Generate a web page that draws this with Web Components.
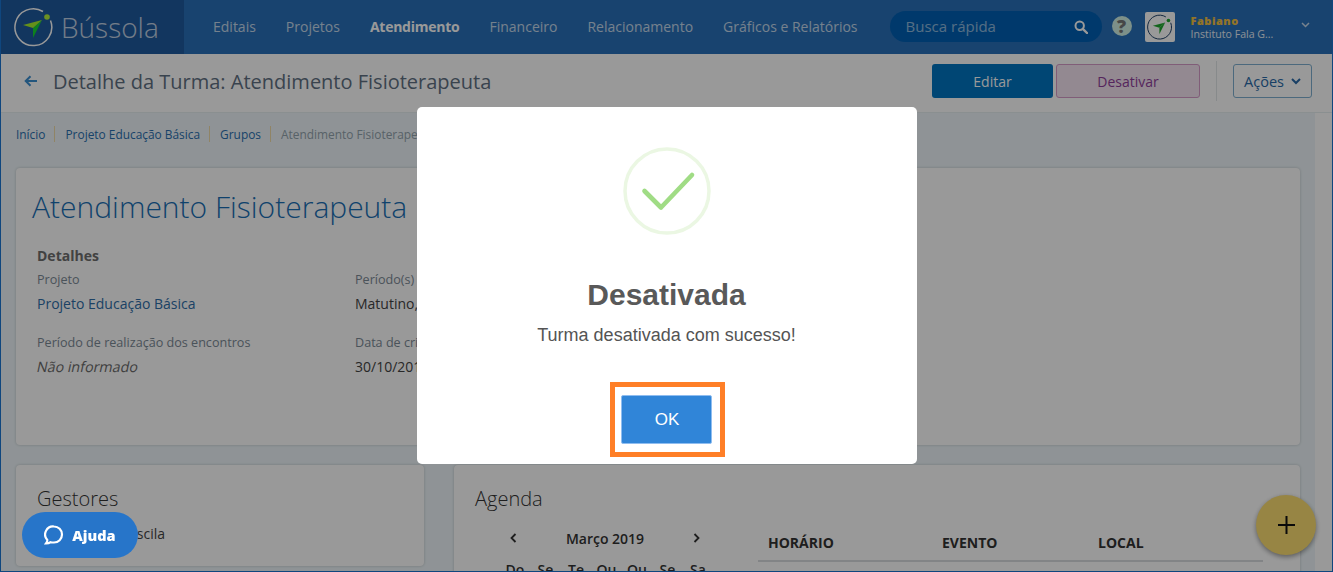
<!DOCTYPE html>
<html lang="pt-BR">
<head>
<meta charset="utf-8">
<title>Detalhe da Turma</title>
<style>
html, body { margin: 0; height: 100%; overflow: hidden; }
body { font-family: "Open Sans", sans-serif; background: #fff; }
</style>
</head>
<body>

<template id="bussola-mark">
  <style>
    :host { display: block; line-height: 0; }
  </style>
  <svg viewBox="0 0 40 40" width="100%" height="100%">
    <path d="M29 4.5A18.4 18.4 0 1 0 36.5 13.5" fill="none" stroke="var(--ring, #fff)" stroke-width="1.5"/>
    <circle cx="33" cy="10" r="2.8" fill="var(--dot, #b5f03a)"/>
    <path d="M28 13 19 31 19 21Z" fill="var(--arrow, #16d832)"/>
    <path d="M9 18 28 13 19 21Z" fill="var(--arrow2, #a8f02c)"/>
  </svg>
</template>

<script>
class BussolaMark extends HTMLElement {
  constructor() {
    super();
    this.attachShadow({ mode: 'open' });
    this.shadowRoot.append(document.getElementById('bussola-mark').content.cloneNode(true));
  }
}
customElements.define('bussola-mark', BussolaMark);

class TopBar extends HTMLElement {
  constructor() {
    super();
    this.attachShadow({ mode: 'open' });
    const itens = ['Editais', 'Projetos', 'Atendimento', 'Financeiro', 'Relacionamento', 'Gráficos e Relatórios'];
    this.shadowRoot.innerHTML = `
      <style>
        :host { display: flex; align-items: center; height: 54px; background: #2870b9; color: #fff; font-family: "Open Sans", sans-serif; }
        .marca { width: 183px; height: 54px; flex: none; background: #1f5a9e; display: flex; align-items: center; padding-left: 13px; box-sizing: border-box; gap: 7px; }
        bussola-mark { width: 40px; height: 40px; }
        .nome { font-size: 28px; color: #fff; font-weight: 300; opacity: .72; }
        nav { display: flex; gap: 30px; padding-left: 29px; margin-bottom: 2px; font-size: 14px; align-items: center; flex: none; }
        nav span { opacity: .72; white-space: nowrap; }
        nav .ativo { opacity: 1; font-weight: 700; letter-spacing: -.25px; }
        .busca { margin: 0 0 1px 32px; width: 212px; height: 31px; border-radius: 16px; background: #0060b4; display: flex; align-items: center; justify-content: space-between; padding: 0 14px 0 16px; box-sizing: border-box; font-size: 15px; flex: none; }
        .busca span { opacity: .55; margin-top: -2px; }
        .ajuda-ic { margin: 0 0 3px 10px; width: 20px; height: 20px; border-radius: 50%; background: #d0f0e4; color: #777; font-size: 18px; font-weight: 800; display: flex; align-items: center; justify-content: center; flex: none; }
        .avatar { margin-left: 13px; width: 30px; height: 30px; border-radius: 2px; background: #fff; display: flex; align-items: center; justify-content: center; flex: none; --ring: #1a3d66; --dot: #1fa82f; --arrow: #1fa82f; --arrow2: #1fa82f; }
        .avatar bussola-mark { width: 26px; height: 26px; }
        .user { margin-left: 16px; font-size: 11px; line-height: 13px; width: 110px; flex: none; }
        .user b { display: block; color: #f5c242; font-weight: 800; letter-spacing: .5px; }
        .user span { opacity: .9; font-size: 10.6px; white-space: nowrap; }
        .seta { flex: none; margin-top: -4px; }
      </style>
      <div class="marca"><bussola-mark></bussola-mark><span class="nome">Bússola</span></div>
      <nav>${itens.map(t => `<span class="${t === 'Atendimento' ? 'ativo' : ''}">${t}</span>`).join('')}</nav>
      <div class="busca"><span>Busca rápida</span>
        <svg width="14" height="14" viewBox="0 0 14 14"><circle cx="5.7" cy="5.7" r="4.2" fill="none" stroke="#fff" stroke-width="2"/><path d="M8.8 8.8 13 13" stroke="#fff" stroke-width="2.4" stroke-linecap="round"/></svg>
      </div>
      <div class="ajuda-ic">?</div>
      <div class="avatar"><bussola-mark></bussola-mark></div>
      <div class="user"><b>Fabiano</b><span>Instituto Fala G...</span></div>
      <svg class="seta" width="9" height="6" viewBox="0 0 9 6"><path d="M1 1l3.5 3.5L8 1" fill="none" stroke="#fff" stroke-opacity=".75" stroke-width="1.5"/></svg>
    `;
  }
}
customElements.define('top-bar', TopBar);

class TitleBar extends HTMLElement {
  constructor() {
    super();
    this.attachShadow({ mode: 'open' });
    this.shadowRoot.innerHTML = `
      <style>
        :host { display: flex; align-items: center; height: 59px; background: #fff; border-bottom: 1px solid #e6eef0; box-sizing: border-box; padding: 0 20px 4px 23px; font-family: "Open Sans", sans-serif; }
        svg.voltar { flex: none; margin-right: 15px; }
        h1 { margin: 0; flex: 1; font-size: 20px; font-weight: 400; color: #5f7183; white-space: nowrap; }
        .btn { box-sizing: border-box; height: 34px; border-radius: 3px; font-size: 14px; display: flex; align-items: center; justify-content: center; }
        .editar { width: 121px; background: #0075c2; color: #fff; }
        .desativar { width: 144px; margin-left: 3px; background: #f6e4f2; border: 1px solid #d59bc9; color: #8e3f9b; }
        .sep { width: 1px; height: 40px; background: #e2e6e8; margin: 0 16px; }
        .acoes { width: 79px; border: 1px solid #7fb0d0; background: #fff; color: #2a6aa8; gap: 7px; font-size: 14.5px; }
      </style>
      <svg class="voltar" width="14" height="12" viewBox="0 0 14 12"><path d="M13 6H2M6.5 1.2 1.7 6l4.8 4.8" fill="none" stroke="#3b8fd1" stroke-width="2"/></svg>
      <h1>Detalhe da Turma: Atendimento Fisioterapeuta</h1>
      <div class="btn editar">Editar</div>
      <div class="btn desativar">Desativar</div>
      <div class="sep"></div>
      <div class="btn acoes">Ações <svg width="10" height="7" viewBox="0 0 10 7"><path d="M1 1l4 4 4-4" fill="none" stroke="#2a6aa8" stroke-width="2"/></svg></div>
    `;
  }
}
customElements.define('title-bar', TitleBar);

class BreadCrumbs extends HTMLElement {
  constructor() {
    super();
    this.attachShadow({ mode: 'open' });
    this.shadowRoot.innerHTML = `
      <style>
        :host { display: flex; align-items: center; height: 41px; padding-left: 15px; font-size: 11.9px; font-family: "Open Sans", sans-serif; color: #2a6fb0; }
        span { padding-right: 9px; margin-right: 10px; border-right: 1px solid #f0dca8; line-height: 16px; white-space: nowrap; }
        span:last-child { border: 0; color: #93a3ad; }
      </style>
      <span>Início</span><span>Projeto Educação Básica</span><span>Grupos</span><span>Atendimento Fisioterapeuta</span>
    `;
  }
}
customElements.define('bread-crumbs', BreadCrumbs);

class PageCard extends HTMLElement {
  constructor() {
    super();
    this.attachShadow({ mode: 'open' });
    this.shadowRoot.innerHTML = `
      <style>
        :host { display: block; background: #fff; border-radius: 4px; box-shadow: 0 0 3px rgba(0,0,0,.2); box-sizing: border-box; }
      </style>
      <slot></slot>
    `;
  }
}
customElements.define('page-card', PageCard);

class TurmaDetalhes extends HTMLElement {
  constructor() {
    super();
    this.attachShadow({ mode: 'open' });
    this.shadowRoot.innerHTML = `
      <style>
        :host { display: block; height: 277px; padding: 19px 22px 0 16px; box-sizing: border-box; font-family: "Open Sans", sans-serif; font-size: 14px; color: #444; }
        h2 { margin: 0 0 19px; font-size: 30px; line-height: 40px; font-weight: 300; color: #1a6fb5; white-space: nowrap; }
        .corpo { padding-left: 5px; }
        h3 { margin: 0; font-size: 14px; line-height: 20px; font-weight: 700; color: #6e6e6e; }
        .grade { display: grid; grid-template-columns: 318px 1fr; }
        .rot { font-size: 12.6px; line-height: 20px; color: #7c8a96; margin-top: 4px; }
        .val { line-height: 22px; margin-top: 3px; height: 36px; white-space: nowrap; }
        .link { color: #2f6ea8; }
        .vazio { display: inline-block; color: #6a6a6a; font-size: 14.3px; transform: skewX(-12deg); }
      </style>
      <h2>Atendimento Fisioterapeuta</h2>
      <div class="corpo">
        <h3>Detalhes</h3>
        <div class="grade">
          <div><div class="rot">Projeto</div><div class="val link">Projeto Educação Básica</div></div>
          <div><div class="rot">Período(s)</div><div class="val">Matutino, Vespertino</div></div>
          <div><div class="rot">Período de realização dos encontros</div><div class="val"><span class="vazio">Não informado</span></div></div>
          <div><div class="rot">Data de criação</div><div class="val">30/10/2018</div></div>
        </div>
      </div>
    `;
  }
}
customElements.define('turma-detalhes', TurmaDetalhes);

class GestoresCard extends HTMLElement {
  constructor() {
    super();
    this.attachShadow({ mode: 'open' });
    this.shadowRoot.innerHTML = `
      <style>
        :host { display: block; padding: 20px 21px; font-family: "Open Sans", sans-serif; height: 101px; box-sizing: border-box; color: #444; overflow: hidden; }
        h4 { margin: 0; font-size: 20px; line-height: 28px; font-weight: 300; color: #333; }
        p { margin: 11px 0 0; font-size: 14px; line-height: 20px; white-space: nowrap; }
      </style>
      <h4>Gestores</h4>
      <p>Maria Lucila Priscila</p>
    `;
  }
}
customElements.define('gestores-card', GestoresCard);

class AgendaCard extends HTMLElement {
  constructor() {
    super();
    this.attachShadow({ mode: 'open' });
    const dias = ['Do', 'Se', 'Te', 'Qu', 'Qu', 'Se', 'Sa'];
    this.shadowRoot.innerHTML = `
      <style>
        :host { display: block; padding: 20px 21px; font-family: "Open Sans", sans-serif; height: 150px; box-sizing: border-box; color: #444; }
        h4 { margin: 0; font-size: 20px; line-height: 28px; font-weight: 300; color: #333; }
        .colunas { display: flex; }
        .cal { width: 283px; flex: none; padding-top: 11px; }
        .mes { display: flex; justify-content: space-between; align-items: center; height: 28px; padding: 0 58px 0 35px; font-size: 14px; font-weight: 600; color: #333; }
        .dias { display: flex; gap: 6.5px; padding-left: 28px; margin-top: 9px; font-size: 14px; font-weight: 600; line-height: 18px; color: #333; }
        .dias span { width: 24px; text-align: center; }
        .tabela { flex: 1; margin-top: 13px; }
        .cab { display: flex; height: 36px; align-items: center; border-bottom: 2px solid #d9dde0; box-sizing: border-box; padding: 0 0 2px 10px; font-size: 14px; font-weight: 700; color: #333; margin-right: 16px; }
        .cab span:nth-child(1) { width: 174px; }
        .cab span:nth-child(2) { width: 156px; }
      </style>
      <h4>Agenda</h4>
      <div class="colunas">
        <div class="cal">
          <div class="mes">
            <svg width="7" height="10" viewBox="0 0 7 10"><path d="M5.5 1 1.5 5l4 4" fill="none" stroke="#333" stroke-width="1.8"/></svg>
            <span>Março 2019</span>
            <svg width="7" height="10" viewBox="0 0 7 10"><path d="M1.5 1l4 4-4 4" fill="none" stroke="#333" stroke-width="1.8"/></svg>
          </div>
          <div class="dias">${dias.map(d => `<span>${d}</span>`).join('')}</div>
        </div>
        <div class="tabela"><div class="cab"><span>HORÁRIO</span><span>EVENTO</span><span>LOCAL</span></div></div>
      </div>
    `;
  }
}
customElements.define('agenda-card', AgendaCard);

class AlertModal extends HTMLElement {
  constructor() {
    super();
    this.attachShadow({ mode: 'open' });
    this.shadowRoot.innerHTML = `
      <style>
        :host { position: fixed; inset: 0; display: flex; justify-content: center; align-items: flex-start; background: rgba(0,0,0,.4); font-family: "Liberation Sans", Arial, sans-serif; z-index: 5; }
        .caixa { margin-top: 107px; width: 500px; height: 357px; background: #fff; border-radius: 5px; display: flex; flex-direction: column; align-items: center; box-sizing: border-box; padding-top: 40px; }
        h2 { margin: 40px 0 0; font-size: 30px; line-height: 40px; font-weight: 700; color: #595959; }
        p { margin: 8px 0 0; font-size: 18px; line-height: 24px; color: #545454; }
        .destaque { margin: 35px 0 0 1px; width: 115px; height: 75px; border: 5px solid #ff7f27; box-sizing: border-box; display: flex; align-items: center; justify-content: center; }
        .ok { width: 91px; height: 49px; margin-right: 2px; padding-left: 2px; box-sizing: border-box; background: #3085d8; border: 1px solid #8fbdf0; border-radius: 2px; color: #fff; font-size: 17px; display: flex; align-items: center; justify-content: center; }
      </style>
      <div class="caixa">
        <svg width="88" height="88" viewBox="0 0 88 88"><circle cx="44" cy="44" r="42" fill="none" stroke="#ebf7e3" stroke-width="3.5"/><path d="M21.5 44 38 60.5 69 28" fill="none" stroke="#a0dc85" stroke-width="4.6" stroke-linecap="round" stroke-linejoin="round"/></svg>
        <h2>Desativada</h2>
        <p>Turma desativada com sucesso!</p>
        <div class="destaque"><div class="ok">OK</div></div>
      </div>
    `;
  }
}
customElements.define('alert-modal', AlertModal);

class AjudaBotao extends HTMLElement {
  constructor() {
    super();
    this.attachShadow({ mode: 'open' });
    this.shadowRoot.innerHTML = `
      <style>
        :host { position: fixed; left: 22px; top: 512px; z-index: 9; width: 116px; height: 46px; border-radius: 23px; background: #2775c9; color: #fff; display: flex; align-items: center; justify-content: center; gap: 8px; font-family: "Open Sans", sans-serif; font-size: 14.5px; font-weight: 800; }
      </style>
      <svg width="20" height="20" viewBox="0 0 20 20"><path d="M10 1.5a8 8 0 0 1 0 16c-1.3 0-2.6 0-3.4-.3-1 .8-2.5 1.3-4.6 1.3.8-1 1.3-2 1.3-3.6A8 8 0 0 1 10 1.5Z" fill="none" stroke="#fff" stroke-width="2.2"/></svg>
      <span>Ajuda</span>
    `;
  }
}
customElements.define('ajuda-botao', AjudaBotao);

class FabMais extends HTMLElement {
  constructor() {
    super();
    this.attachShadow({ mode: 'open' });
    this.shadowRoot.innerHTML = `
      <style>
        :host { position: fixed; left: 1256px; top: 495px; width: 60px; height: 60px; border-radius: 50%; background: #fcde72; box-shadow: 0 2px 5px rgba(0,0,0,.4); display: flex; align-items: center; justify-content: center; z-index: 3; }
      </style>
      <svg width="17" height="18" viewBox="0 0 17 18"><path d="M8.5 0v18M0 9h17" stroke="#111" stroke-width="2"/></svg>
    `;
  }
}
customElements.define('fab-mais', FabMais);

class AppPagina extends HTMLElement {
  constructor() {
    super();
    this.attachShadow({ mode: 'open' });
    this.shadowRoot.innerHTML = `
      <style>
        :host { display: block; height: 572px; overflow: hidden; box-sizing: border-box; border: solid #1976d2; border-width: 0 1px 1px 1px; background: #fff; }
        .fundo { margin-right: 17px; height: 459px; background: #eef6fa; overflow: hidden; min-height: 100%; }
        .conteudo { padding: 14px 15px 0 15px; display: flex; flex-direction: column; gap: 20px; }
        .linha { display: grid; grid-template-columns: 408px 1fr; gap: 30px; align-items: start; }
      </style>
      <top-bar></top-bar>
      <title-bar></title-bar>
      <div class="fundo">
        <bread-crumbs></bread-crumbs>
        <div class="conteudo">
          <page-card><turma-detalhes></turma-detalhes></page-card>
          <div class="linha">
            <page-card><gestores-card></gestores-card></page-card>
            <page-card><agenda-card></agenda-card></page-card>
          </div>
        </div>
      </div>
      <fab-mais></fab-mais>
      <alert-modal></alert-modal>
      <ajuda-botao></ajuda-botao>
    `;
  }
}
customElements.define('app-pagina', AppPagina);
</script>

<app-pagina></app-pagina>
</body>
</html>
